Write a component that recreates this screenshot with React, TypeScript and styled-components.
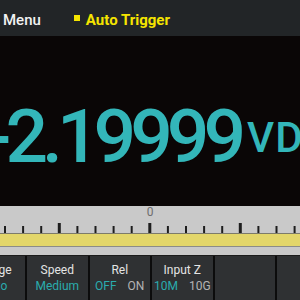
import React from 'react';
import styled, { createGlobalStyle } from 'styled-components';

const GlobalStyle = createGlobalStyle`
  html, body {
    margin: 0;
    padding: 0;
    background: #0a0606;
    overflow: hidden;
  }
  body {
    font-family: Roboto, "Liberation Sans", sans-serif;
  }
`;

const Screen = styled.div`
  width: 300px;
  height: 300px;
  display: flex;
  flex-direction: column;
  overflow: hidden;
  background: #0a0606;
`;

const TopBar = styled.div`
  height: 36px;
  flex: 0 0 36px;
  box-sizing: border-box;
  padding: 3px 0 0 3px;
  display: flex;
  align-items: center;
  background: #222527;
  font-size: 15px;
`;

const MenuLabel = styled.span`
  color: #f2f2f2;
  font-weight: 500;
`;

const TriggerSquare = styled.span`
  width: 6px;
  height: 6px;
  margin: -3px 6px 0 33px;
  background: #f5e400;
`;

const TriggerLabel = styled.span`
  color: #f5e400;
  font-weight: 700;
`;

const Display = styled.div`
  flex: 0 0 170px;
  box-sizing: border-box;
  padding-top: 63px;
`;

const Reading = styled.div`
  display: flex;
  align-items: flex-start;
  margin-left: -14px;
  white-space: nowrap;
  color: #33b6b9;
`;

const Digits = styled.span`
  font-size: 75px;
  line-height: 75px;
  font-weight: 500;
  letter-spacing: -6px;
`;

const Unit = styled.span`
  font-size: 42px;
  line-height: 42px;
  font-weight: 500;
  margin: 18px 0 0 7px;
  letter-spacing: 1px;
`;

const Scale = styled.div`
  flex: 0 0 27px;
  display: flex;
  flex-direction: column;
  justify-content: space-between;
  background: #c9c9c9;
`;

const ZeroLabel = styled.div`
  text-align: center;
  font-size: 12px;
  line-height: 13px;
  color: #6e6e6e;
`;

const Ticks = styled.svg`
  display: block;
`;

const Bar = styled.div`
  flex: 0 0 12px;
  background: #e3d66a;
  border-top: 1px solid #7d7b6a;
  border-bottom: 1px solid #8c8c88;
`;

const Strip = styled.div`
  flex: 0 0 8px;
  background: #c9c9c9;
  border-bottom: 1px solid #1c1c1c;
`;

const Softkeys = styled.div`
  flex: 1;
  display: flex;
  gap: 2px;
  margin-left: -35.5px;
  background: #0c0c0c;
`;

const Key = styled.div`
  flex: 0 0 60.5px;
  box-sizing: border-box;
  padding-top: 6px;
  background: #2f3133;
  display: flex;
  flex-direction: column;
  align-items: center;
  font-size: 12px;
  line-height: 16px;
  white-space: nowrap;
`;

const KeyTitle = styled.span`
  color: #e4e4e4;
`;

const KeyValues = styled.span`
  display: flex;
  gap: 11px;
`;

const KeyValue = styled.span<{ active?: boolean }>`
  color: ${({ active }) => (active ? '#2aacae' : '#b4b4b4')};
`;

type SoftkeyProps = {
  title?: string;
  values?: string[];
  active?: number;
};

const Softkey: React.FC<SoftkeyProps> = ({ title, values = [], active = 0 }) => (
  <Key>
    {title && <KeyTitle>{title}</KeyTitle>}
    <KeyValues>
      {values.map((v, i) => (
        <KeyValue key={v} active={i === active}>
          {v}
        </KeyValue>
      ))}
    </KeyValues>
  </Key>
);

const ticks = Array.from({ length: 17 }, (_, i) => i);

export default function App() {
  return (
    <>
      <GlobalStyle />
      <Screen>
        <TopBar>
          <MenuLabel>Menu</MenuLabel>
          <TriggerSquare />
          <TriggerLabel>Auto Trigger</TriggerLabel>
        </TopBar>
        <Display>
          <Reading>
            <Digits>-2.19999</Digits>
            <Unit>VDC</Unit>
          </Reading>
        </Display>
        <Scale>
          <ZeroLabel>0</ZeroLabel>
          <Ticks width="300" height="10" viewBox="0 0 300 10">
            {ticks.map((i) => {
              const x = 5 + i * 18.1;
              const major = i === 3 || i === 8 || i === 13;
              return (
                <rect
                  key={i}
                  x={major ? x - 1.5 : x - 1}
                  y={major ? 0 : 3}
                  width={major ? 3 : 2}
                  height={major ? 10 : 7}
                  fill="#1e1e1e"
                />
              );
            })}
          </Ticks>
        </Scale>
        <Bar />
        <Strip />
        <Softkeys>
          <Softkey title="Range" values={['Auto']} />
          <Softkey title="Speed" values={['Medium']} />
          <Softkey title="Rel" values={['OFF', 'ON']} />
          <Softkey title="Input Z" values={['10M', '10G']} />
          <Softkey />
          <Softkey />
        </Softkeys>
      </Screen>
    </>
  );
}
